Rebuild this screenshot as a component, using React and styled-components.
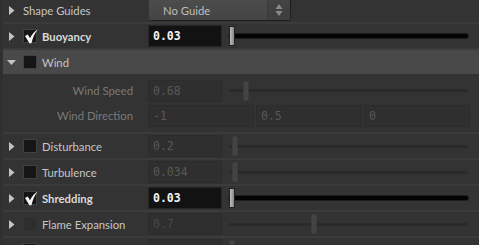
import React from 'react';
import styled, { createGlobalStyle } from 'styled-components';

const Global = createGlobalStyle`
  html, body { margin: 0; padding: 0; background: #333333; overflow: hidden; }
  body { font-family: Lato, "Noto Sans", sans-serif; }
  #root { width: 479px; height: 245px; overflow: hidden; }
`;

const Panel = styled.div`
  width: 479px;
  height: 245px;
  overflow: hidden;
  background: #303030;
  padding-left: 3px;
  box-sizing: border-box;
`;

const List = styled.div`
  margin-top: -2px;
  display: flex;
  flex-direction: column;
  background: #333333;
`;

const Row = styled.div`
  height: 24px;
  flex: none;
  display: flex;
  align-items: center;
  background: ${p => (p.$header ? '#494949' : '#333333')};
  border-bottom: ${p => (p.$sep === false ? 'none' : '2px solid #3b3b3b')};
`;

const Group = styled.div`
  display: flex;
  flex-direction: column;
  padding: 4px 0;
  border-bottom: 2px solid #3b3b3b;
`;

const SubRow = styled.div`
  height: 25px;
  display: flex;
  align-items: center;
`;

const LabelCell = styled.div`
  width: 145px;
  flex: none;
  height: 100%;
  display: flex;
  align-items: center;
  padding-left: 4px;
  box-sizing: border-box;
`;

const SubLabel = styled.div`
  width: 145px;
  flex: none;
  padding-right: 15px;
  box-sizing: border-box;
  text-align: right;
  font-size: 11.3px;
  color: #7a7a7a;
  white-space: nowrap;
`;

const Twisty = styled.div`
  width: 16px;
  flex: none;
  display: flex;
  align-items: center;
  padding-left: ${p => (p.$open ? '0px' : '2px')};
  box-sizing: border-box;
  svg { display: block; }
`;

const Box = styled.div`
  width: 14px;
  height: 14px;
  flex: none;
  box-sizing: border-box;
  background: ${p => (p.$disabled ? '#2e2e2e' : '#151515')};
  border: 1px solid ${p => (p.$disabled ? '#313131' : '#404040')};
  position: relative;
  svg { position: absolute; left: 0px; top: -1px; }
`;

const Label = styled.span`
  margin-left: ${p => (p.$noBox ? '0px' : '5px')};
  font-size: 11.3px;
  font-weight: ${p => (p.$bold ? 700 : 400)};
  color: ${p => (p.$bold ? '#dadada' : '#c6c6c6')};
  white-space: nowrap;
`;

const ValueCell = styled.div`
  flex: 1;
  display: flex;
  align-items: center;
  height: 100%;
  padding-right: 9px;
  gap: 2px;
`;

const Field = styled.div`
  width: ${p => (p.$wide ? 'auto' : '74px')};
  flex: ${p => (p.$wide ? '1' : 'none')};
  height: 22px;
  box-sizing: border-box;
  display: flex;
  align-items: center;
  padding-left: 4px;
  font-family: "DejaVu Sans Mono", "Liberation Mono", monospace;
  font-size: 11.5px;
  background: ${p => (p.$active ? '#121212' : '#2f2f2f')};
  border: 1px solid ${p => (p.$active ? '#262626' : '#2c2c2c')};
  color: ${p => (p.$active ? '#f2f2f2' : p.$dim ? '#474747' : '#585858')};
  font-weight: ${p => (p.$active ? 700 : 400)};
`;

const Slider = styled.div`
  flex: 1;
  height: 22px;
  margin: 0 0 0 5px;
  position: relative;
  display: flex;
  align-items: center;
`;

const Track = styled.div`
  flex: 1;
  height: ${p => (p.$active ? '4px' : '3px')};
  border-radius: 2px;
  background: ${p => (p.$active ? '#030303' : '#2a2a2a')};
  box-shadow: ${p => (p.$active ? '0 0 0 1px #1d1d1d' : 'none')};
  margin-right: 2px;
`;

const Thumb = styled.div`
  position: absolute;
  top: 1px;
  width: 6px;
  height: 20px;
  box-sizing: border-box;
  border-radius: 1px;
  background: ${p =>
    p.$active ? 'linear-gradient(90deg, #bdbdbd, #a2a2a2 50%, #858585)' : '#444444'};
  border: 1px solid ${p => (p.$active ? '#202020' : '#3b3b3b')};
`;

const Dropdown = styled.div`
  margin-left: 1px;
  width: 141px;
  height: 22px;
  box-sizing: border-box;
  display: flex;
  align-self: flex-start;
  background: linear-gradient(#4d4d4d, #444444);
  box-shadow: 1px 1px 0 #1e1e1e;
  border-radius: 0 0 2px 2px;
`;

const DropText = styled.div`
  flex: 1;
  display: flex;
  align-items: center;
  padding-left: 14px;
  padding-top: 2px;
  font-size: 11.3px;
  color: #bdbdbd;
`;

const DropArrows = styled.div`
  width: 22px;
  display: flex;
  align-items: center;
  justify-content: center;
  padding-top: 2px;
  background: linear-gradient(#444444, #3d3d3d);
  border-left: 1px solid #3a3a3a;
`;

const RightTri = () => (
  <svg width="6" height="9" viewBox="0 0 6 9">
    <path d="M0 0 L5.5 4.5 L0 9 Z" fill="#c4c4c4" />
  </svg>
);

const DownTri = () => (
  <svg width="9" height="5" viewBox="0 0 9 5">
    <path d="M0 0 L9 0 L4.5 5 Z" fill="#c4c4c4" />
  </svg>
);

const Check = () => (
  <svg width="14" height="15" viewBox="0 0 14 15">
    <path
      d="M1 7 L3.8 5.6 L6 9.2 C8 5.2 10.5 2.2 13.8 0.4 C10.8 4 8.8 8.5 7.4 14.2 L5.4 14.2 Z"
      fill="#f4f4f4"
    />
  </svg>
);

const ParamRow = ({ label, value, thumb, checked, disabledBox, dim, sep }) => {
  const active = !!checked;
  return (
    <Row $sep={sep}>
      <LabelCell>
        <Twisty><RightTri /></Twisty>
        <Box $disabled={disabledBox}>{checked && <Check />}</Box>
        {label && <Label $bold={checked}>{label}</Label>}
      </LabelCell>
      <ValueCell>
        <Field $active={active} $dim={dim}>{value}</Field>
        <Slider>
          <Track $active={active} />
          <Thumb $active={active} style={{ left: `${thumb}px` }} />
        </Slider>
      </ValueCell>
    </Row>
  );
};

export default function App() {
  return (
    <>
      <Global />
      <Panel>
        <List>
          <Row>
            <LabelCell>
              <Twisty><RightTri /></Twisty>
              <Label $noBox>Shape Guides</Label>
            </LabelCell>
            <ValueCell>
              <Dropdown>
                <DropText>No Guide</DropText>
                <DropArrows>
                  <svg width="8" height="14" viewBox="0 0 8 14">
                    <path d="M4 1 L7.5 6 L0.5 6 Z" fill="#8a8a8a" />
                    <path d="M0.5 8 L7.5 8 L4 13 Z" fill="#8a8a8a" />
                  </svg>
                </DropArrows>
              </Dropdown>
            </ValueCell>
          </Row>
          <ParamRow label="Buoyancy" value="0.03" thumb={0} checked />
          <Row $header $sep={false}>
            <LabelCell>
              <Twisty $open><DownTri /></Twisty>
              <Box />
              <Label>Wind</Label>
            </LabelCell>
          </Row>
          <Group>
            <SubRow>
              <SubLabel>Wind Speed</SubLabel>
              <ValueCell>
                <Field>0.68</Field>
                <Slider>
                  <Track />
                  <Thumb style={{ left: '14px' }} />
                </Slider>
              </ValueCell>
            </SubRow>
            <SubRow>
              <SubLabel>Wind Direction</SubLabel>
              <ValueCell>
                <Field $wide>-1</Field>
                <Field $wide>0.5</Field>
                <Field $wide>0</Field>
              </ValueCell>
            </SubRow>
          </Group>
          <ParamRow label="Disturbance" value="0.2" thumb={3} />
          <ParamRow label="Turbulence" value="0.034" thumb={3} />
          <ParamRow label="Shredding" value="0.03" thumb={0} checked />
          <ParamRow label="Flame Expansion" value="0.7" thumb={82} disabledBox dim />
          <ParamRow label="" value="" thumb={0} />
        </List>
      </Panel>
    </>
  );
}
